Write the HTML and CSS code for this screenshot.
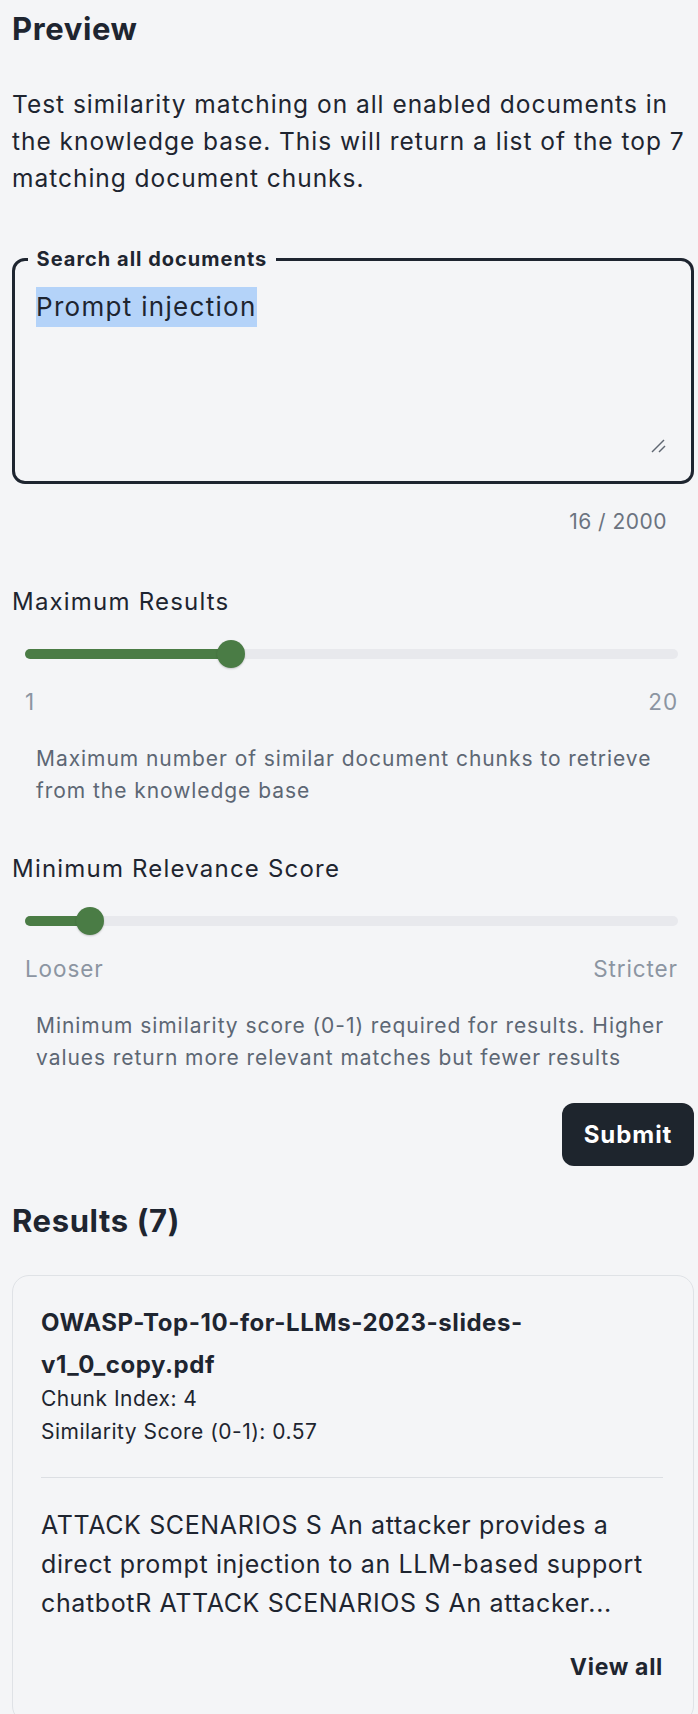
FILE: index.html
```html
<!DOCTYPE html>
<html lang="en">
<head>
    <meta charset="UTF-8">
    <meta name="viewport" content="width=device-width, initial-scale=1.0">
    <title>Preview</title>
    <link rel="stylesheet" href="styles.css">
</head>
<body>
    <div class="page">
        <h2 class="page-title">Preview</h2>
        <p class="intro">Test similarity matching on all enabled documents in the knowledge base. This will return a list of the top 7 matching document chunks.</p>

        <fieldset class="search-box">
            <legend>Search all documents</legend>
            <div class="search-text">
                <span class="selected">Prompt injection</span>
                <svg class="resize-handle" width="16" height="14" viewBox="0 0 16 14">
                    <line x1="1" y1="13" x2="13" y2="1" />
                    <line x1="8" y1="13" x2="14" y2="7" />
                </svg>
            </div>
        </fieldset>
        <div class="counter">16 / 2000</div>

        <div class="field">
            <div class="field-label">Maximum Results</div>
            <div class="slider">
                <div class="slider-track">
                    <div class="slider-fill" style="width: 31.58%"></div>
                    <div class="slider-thumb" style="left: 31.58%"></div>
                </div>
                <div class="slider-marks">
                    <span>1</span>
                    <span>20</span>
                </div>
            </div>
            <p class="hint">Maximum number of similar document chunks to retrieve from the knowledge base</p>
        </div>

        <div class="field">
            <div class="field-label">Minimum Relevance Score</div>
            <div class="slider">
                <div class="slider-track">
                    <div class="slider-fill" style="width: 10%"></div>
                    <div class="slider-thumb" style="left: 10%"></div>
                </div>
                <div class="slider-marks">
                    <span>Looser</span>
                    <span>Stricter</span>
                </div>
            </div>
            <p class="hint">Minimum similarity score (0-1) required for results. Higher values return more relevant matches but fewer results</p>
        </div>

        <div class="actions">
            <button class="submit-button">Submit</button>
        </div>

        <h2 class="results-title">Results (7)</h2>

        <div class="result-card">
            <h3 class="result-name">OWASP-Top-10-for-LLMs-2023-slides-v1_0_copy.pdf</h3>
            <div class="result-meta">
                <p>Chunk Index: 4</p>
                <p>Similarity Score (0-1): 0.57</p>
            </div>
            <hr class="divider">
            <p class="result-text">ATTACK SCENARIOS S An attacker provides a direct prompt injection to an LLM-based support chatbotR ATTACK SCENARIOS S An attacker...</p>
            <div class="card-actions">
                <a href="#" class="view-all">View all</a>
            </div>
        </div>
    </div>
</body>
</html>
```

FILE: styles.css
```css
* {
    box-sizing: border-box;
}
body {
    margin: 0;
    background-color: #f4f5f7;
    color: #1e2530;
    font-family: Inter, Roboto, "Liberation Sans", sans-serif;
    letter-spacing: 0.03em;
}
.page {
    padding: 11px 4px 0 12px;
}
.page-title, .results-title {
    margin: 0;
    font-size: 31px;
    line-height: 36px;
    font-weight: 700;
    letter-spacing: 0.02em;
}
.intro {
    margin: 39px -4px 0 0;
    font-size: 24.5px;
    line-height: 37px;
    letter-spacing: 0.04em;
}

/* search box */
.search-box {
    margin: 50px 0 0;
    padding: 0;
    border: 3px solid #1e2530;
    border-radius: 13px;
}
.search-box legend {
    margin-left: 12.6px;
    padding: 0 9px;
    font-size: 20px;
    line-height: 24px;
    font-weight: 700;
    letter-spacing: 0.05em;
}
.search-text {
    position: relative;
    height: 182px;
    margin-bottom: 28px;
    padding: 16px 24px 0 21px;
    font-size: 26px;
    line-height: 40px;
    letter-spacing: 0.05em;
}
.selected {
    display: inline-block;
    background-color: #b4d3f9;
}
.resize-handle {
    position: absolute;
    right: 24px;
    bottom: 0;
    stroke: #5f6772;
    stroke-width: 1.4;
}
.counter {
    margin-top: 23px;
    padding-right: 27px;
    text-align: right;
    font-size: 21px;
    line-height: 30px;
    color: #6b7380;
}

/* sliders */
.field {
    margin-top: 50px;
}
.field + .field {
    margin-top: 47px;
}
.field-label {
    font-size: 24px;
    line-height: 30px;
    letter-spacing: 0.05em;
}
.slider {
    margin-top: 23px;
    padding: 0 16px 0 13px;
}
.slider-track {
    position: relative;
    height: 28px;
}
.slider-track::before {
    content: '';
    position: absolute;
    left: 0;
    right: 0;
    top: 9px;
    height: 10px;
    border-radius: 5px;
    background: #e8e9ed;
}
.slider-fill {
    position: absolute;
    left: 0;
    top: 9px;
    height: 10px;
    border-radius: 5px;
    background: #4a7c45;
}
.slider-thumb {
    position: absolute;
    top: 0;
    width: 28px;
    height: 28px;
    margin-left: -14px;
    border-radius: 50%;
    background: #4a7c45;
    box-shadow: 0 1px 2px rgba(0, 0, 0, 0.2);
}
.slider-marks {
    display: flex;
    justify-content: space-between;
    margin-top: 19px;
    font-size: 22.5px;
    line-height: 30px;
    letter-spacing: 0.04em;
    color: #8c95a2;
}
.hint {
    margin: 26px 0 0;
    padding: 0 16px 0 24px;
    font-size: 21px;
    line-height: 32px;
    letter-spacing: 0.045em;
    color: #5d6774;
}

.actions {
    display: flex;
    justify-content: flex-end;
    margin-top: 29px;
}
.submit-button {
    width: 132px;
    height: 63px;
    border: none;
    border-radius: 12px;
    background-color: #1e252d;
    color: #fff;
    font-family: inherit;
    font-size: 24px;
    font-weight: 700;
    letter-spacing: 0.04em;
    cursor: pointer;
}
.results-title {
    margin-top: 37px;
}

/* result card */
.result-card {
    margin-top: 36px;
    padding: 26px 30px 40px 28px;
    border: 1px solid #dfe2e6;
    border-radius: 17px;
}
.result-name {
    margin: 0;
    font-size: 24px;
    line-height: 42px;
    font-weight: 700;
    letter-spacing: 0.023em;
}
.result-meta {
    margin-top: -4px;
}
.result-meta p {
    margin: 0;
    font-size: 21px;
    line-height: 33px;
}
.divider {
    margin: 29px 0 0;
    border: none;
    border-top: 1px solid #dcdfe3;
}
.result-text {
    margin: 28px 0 0;
    font-size: 25px;
    line-height: 39px;
    letter-spacing: 0.025em;
}
.card-actions {
    display: flex;
    justify-content: flex-end;
    margin-top: 29px;
}
.view-all {
    font-size: 23px;
    line-height: 30px;
    font-weight: 700;
    letter-spacing: 0.03em;
    color: #1e2530;
    text-decoration: none;
}
```
